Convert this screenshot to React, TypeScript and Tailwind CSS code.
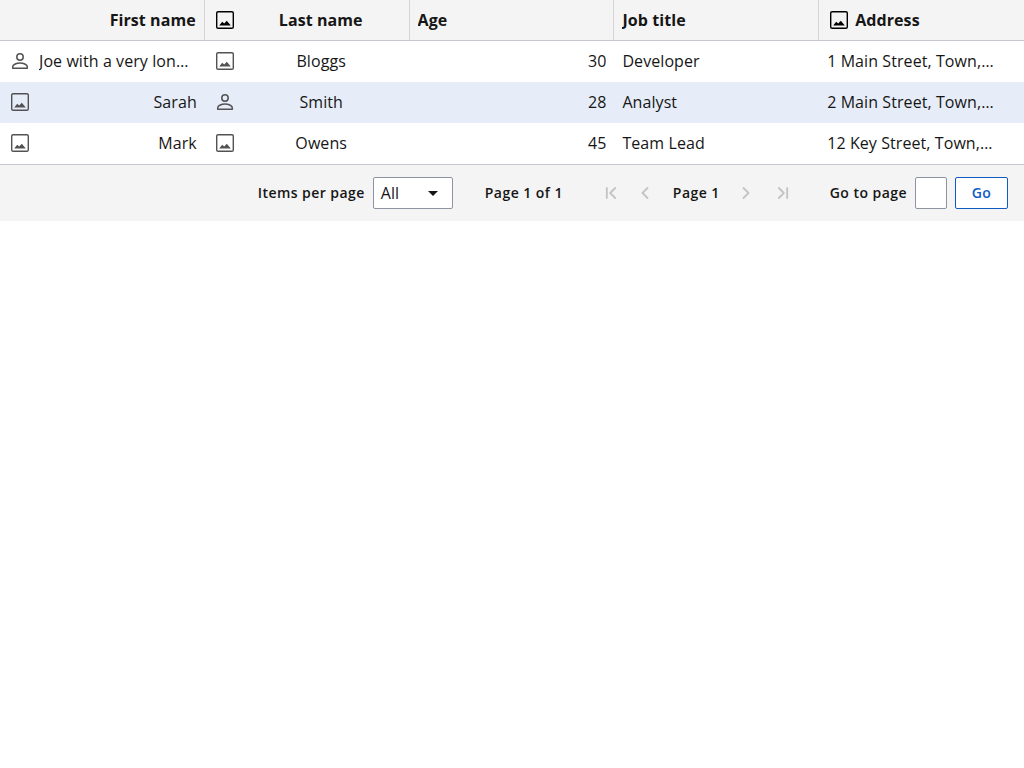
import { ChevronFirst, ChevronLast, ChevronLeft, ChevronRight } from "lucide-react"

type CellIcon = "person" | "image"

interface Cell {
  text: string
  icon?: CellIcon
  align: string
}

function ImageIcon({ className }: { className?: string }) {
  return (
    <svg viewBox="0 0 20 20" className={className} fill="none">
      <rect x="1.7" y="1.7" width="16.6" height="16.6" rx="1.4" stroke="currentColor" strokeWidth="1.4" />
      <path d="M4.2 15.5 7.2 11.8 9.2 13.6 11.8 10.8 15.8 15.5Z" fill="currentColor" />
    </svg>
  )
}

function PersonIcon({ className }: { className?: string }) {
  return (
    <svg viewBox="0 0 24 24" className={className} fill="none" stroke="currentColor" strokeWidth="1.5">
      <circle cx="12" cy="8" r="3.2" />
      <path d="M4.7 19.3V17.8C4.7 15.3 9 14 12 14s7.3 1.3 7.3 3.8v1.5Z" strokeLinejoin="round" />
    </svg>
  )
}

const rows: Cell[][] = [
  [
    { text: "Joe with a very long name", icon: "person", align: "text-left" },
    { text: "Bloggs", icon: "image", align: "text-center" },
    { text: "30", align: "text-right" },
    { text: "Developer", align: "text-left" },
    { text: "1 Main Street, Town, County", align: "text-left" },
  ],
  [
    { text: "Sarah", icon: "image", align: "text-right" },
    { text: "Smith", icon: "person", align: "text-center" },
    { text: "28", align: "text-right" },
    { text: "Analyst", align: "text-left" },
    { text: "2 Main Street, Town, County", align: "text-left" },
  ],
  [
    { text: "Mark", icon: "image", align: "text-right" },
    { text: "Owens", icon: "image", align: "text-center" },
    { text: "45", align: "text-right" },
    { text: "Team Lead", align: "text-left" },
    { text: "12 Key Street, Town, County", align: "text-left" },
  ],
]

function HeaderCell({ label, icon, align, last }: { label: string; icon?: boolean; align: string; last?: boolean }) {
  return (
    <div className={`flex items-center gap-[6px] pr-2 h-[40px] ${icon ? "pl-[10px]" : "pl-2"} ${last ? "" : "border-r border-[#d4d4d8]"}`}>
      {icon && <ImageIcon className="w-[20px] h-[20px] shrink-0 text-black" />}
      <span className={`flex-1 min-w-0 truncate font-bold text-[16px] tracking-[0.08px] text-[#161616] ${align}`}>{label}</span>
    </div>
  )
}

export default function App() {
  return (
    <div className="w-[1024px] bg-white font-['Open_Sans',sans-serif] text-[#161616]">
      <div className="grid grid-cols-5 bg-[#f4f4f4] border-b border-[#c6c9cf]">
        <HeaderCell label="First name" align="text-right" />
        <HeaderCell label="Last name" icon align="text-center" />
        <HeaderCell label="Age" align="text-left" />
        <HeaderCell label="Job title" align="text-left" />
        <HeaderCell label="Address" icon align="text-left" last />
      </div>

      {rows.map((row, i) => (
        <div key={i} className={`grid grid-cols-5 h-[41px] ${i === 1 ? "bg-[#e6edf8]" : "bg-white"}`}>
          {row.map((cell, j) => (
            <div key={j} className={`flex items-center gap-[9px] pr-2 pb-[1px] min-w-0 ${cell.icon ? "pl-[10px]" : "pl-2"}`}>
              {cell.icon === "person" && <PersonIcon className="w-[24px] h-[24px] -mx-[2px] shrink-0 text-[#525252]" />}
              {cell.icon === "image" && <ImageIcon className="w-[20px] h-[20px] shrink-0 text-[#525252]" />}
              <span className={`flex-1 min-w-0 text-[16px] tracking-[0.08px] ${cell.align} ${j === 1 ? "pr-[3px]" : ""} ${j === 4 ? "pr-[20px]" : ""}`}>
                <span className="block truncate">{cell.text}</span>
              </span>
            </div>
          ))}
        </div>
      ))}

      <div className="flex items-center justify-end h-[57px] pr-4 bg-[#f4f4f4] border-t border-[#c6c9cf] text-[14px] font-semibold tracking-[0.45px]">
        <span className="mb-[2px]">Items per page</span>
        <div className="flex items-center justify-between ml-2 w-[80px] h-[32px] pl-[7px] pr-[14px] bg-white border border-[#8d93a0] rounded-[2px] text-[16px] font-normal tracking-normal">
          <span>All</span>
          <span className="w-0 h-0 border-x-[5px] border-x-transparent border-t-[5px] border-t-[#161616]" />
        </div>
        <span className="ml-8 mb-[2px]">Page 1 of 1</span>
        <div className="flex items-center ml-[38px] text-[#c4c4c4]">
          <ChevronFirst size={20} strokeWidth={2.2} />
          <ChevronLeft size={20} strokeWidth={2.2} className="ml-[14px]" />
        </div>
        <span className="ml-[18px] mb-[2px]">Page 1</span>
        <div className="flex items-center ml-4 text-[#c4c4c4]">
          <ChevronRight size={20} strokeWidth={2.2} />
          <ChevronLast size={20} strokeWidth={2.2} className="ml-[17px]" />
        </div>
        <span className="ml-[37px] mb-[2px]">Go to page</span>
        <input className="ml-2 w-[32px] h-[32px] bg-white border border-[#8d93a0] rounded-[2px]" />
        <button className="ml-2 w-[53px] h-[32px] pb-[2px] bg-white border border-[#0f5bc4] rounded-[2px] text-[#0f5bc4]">Go</button>
      </div>
    </div>
  )
}
